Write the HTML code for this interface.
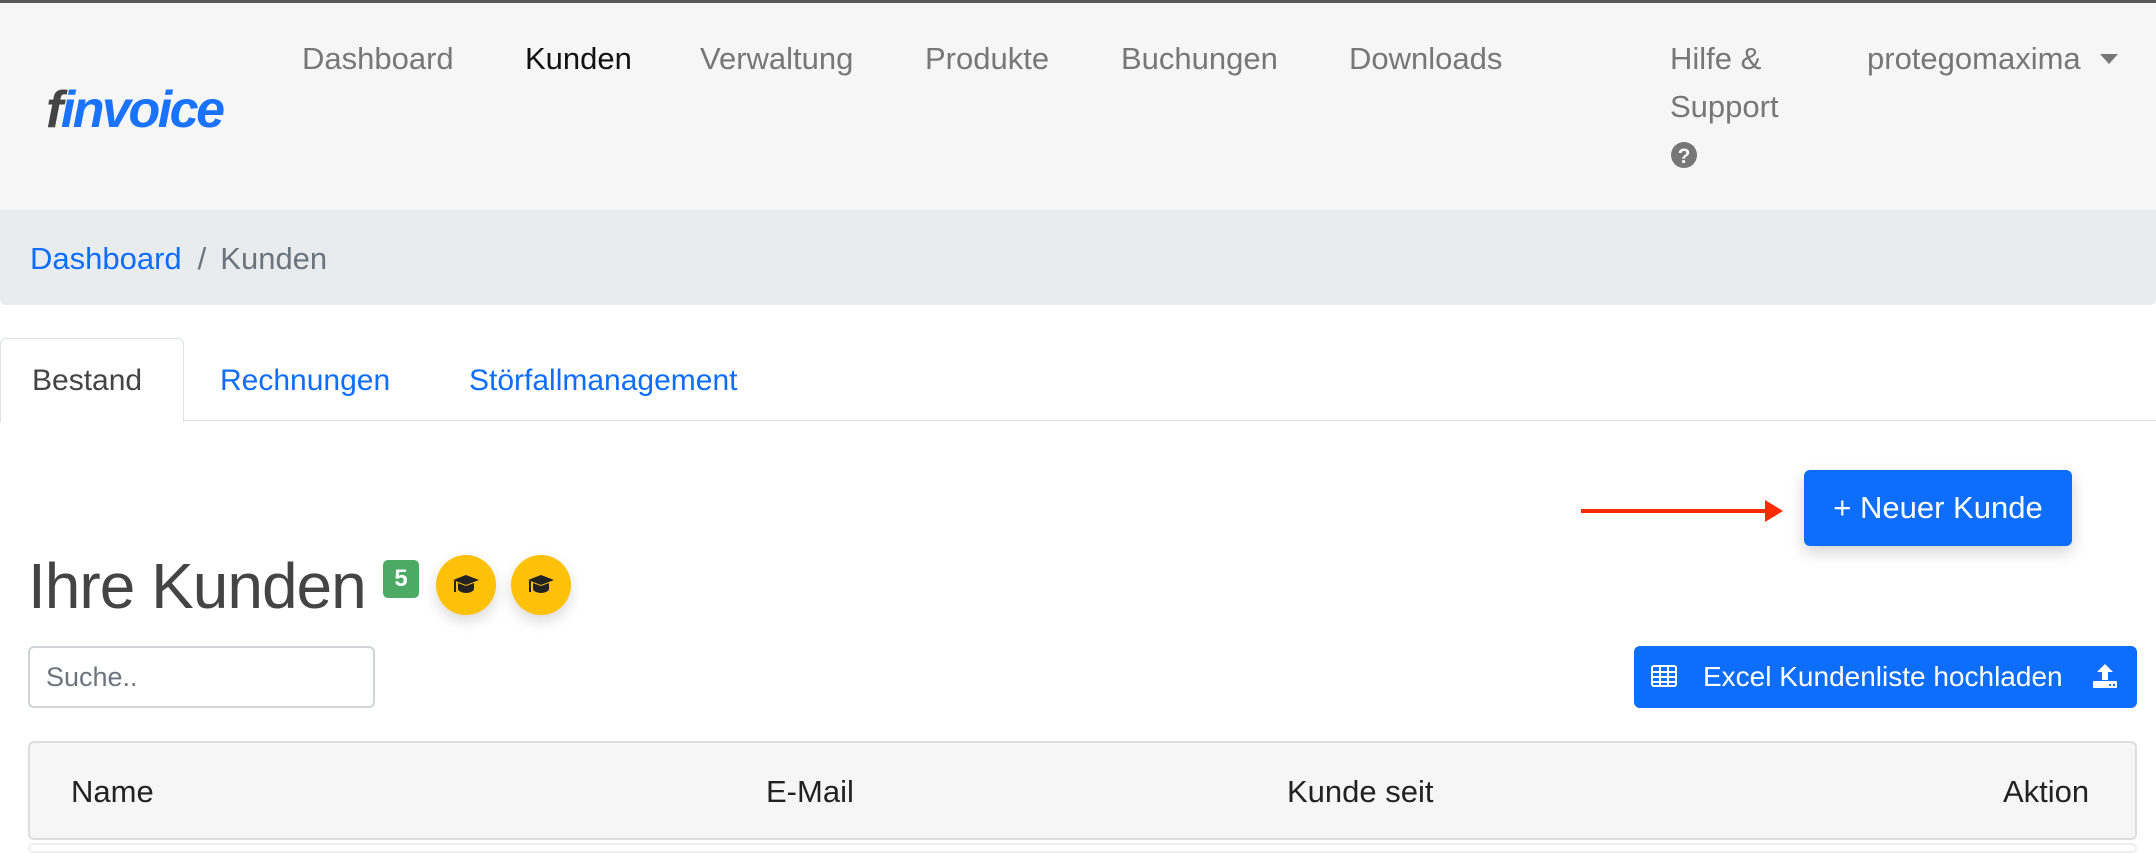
<!DOCTYPE html>
<html><head><meta charset="utf-8"><style>
*{box-sizing:border-box;margin:0;padding:0}
body{width:2156px;height:848px;overflow:hidden;background:#fff;font-family:"Liberation Sans",sans-serif;position:relative}
.a{position:absolute;white-space:nowrap}
.nav{font-size:31px;color:#777}
</style></head><body>
<div class="a" style="left:0;top:0;width:2156px;height:3px;background:#5a5a5a"></div>
<div class="a" style="left:0;top:3px;width:2156px;height:207px;background:#f6f6f6"></div>
<div class="a" style="left:46px;top:80px;font-size:52px;font-weight:bold;font-style:italic;letter-spacing:-2.5px;color:#1a73ff"><span style="color:#444">f</span>invoice</div>
<div class="a nav" style="left:302px;top:41px">Dashboard</div>
<div class="a nav" style="left:525px;top:41px;color:#111">Kunden</div>
<div class="a nav" style="left:700px;top:41px">Verwaltung</div>
<div class="a nav" style="left:925px;top:41px">Produkte</div>
<div class="a nav" style="left:1121px;top:41px">Buchungen</div>
<div class="a nav" style="left:1349px;top:41px">Downloads</div>
<div class="a nav" style="left:1670px;top:41px;line-height:48px;top:35px">Hilfe &amp;<br>Support</div>
<svg class="a" style="left:1670px;top:141px" width="28" height="28" viewBox="0 0 28 28"><circle cx="14" cy="14" r="13" fill="#777"/><text x="14" y="22" text-anchor="middle" font-family="Liberation Sans" font-weight="bold" font-size="21" fill="#f6f6f6">?</text></svg>
<div class="a nav" style="left:1867px;top:41px">protegomaxima</div>
<div class="a" style="left:2100px;top:54px;width:0;height:0;border-left:9px solid transparent;border-right:9px solid transparent;border-top:10px solid #777"></div>
<div class="a" style="left:0;top:210px;width:2156px;height:95px;background:#e9ecef;border-radius:0 0 6px 6px"></div>
<div class="a" style="left:30px;top:241px;font-size:31px;color:#0d6efd">Dashboard<span style="color:#6c757d;padding:0 14px 0 16px">/</span><span style="color:#6c757d">Kunden</span></div>
<div class="a" style="left:0;top:420px;width:2156px;height:1px;background:#dee2e6"></div>
<div class="a" style="left:0;top:338px;width:184px;height:84px;background:#fff;border:1px solid #dee2e6;border-bottom:none;border-radius:6px 6px 0 0"></div>
<div class="a" style="left:32px;top:364px;font-size:30px;color:#444">Bestand</div>
<div class="a" style="left:220px;top:364px;font-size:30px;color:#0d6efd">Rechnungen</div>
<div class="a" style="left:469px;top:364px;font-size:30px;color:#0d6efd">Störfallmanagement</div>
<div class="a" style="left:1581px;top:509px;width:190px;height:4px;background:#ff2a00"></div>
<div class="a" style="left:1765px;top:500px;width:0;height:0;border-top:11px solid transparent;border-bottom:11px solid transparent;border-left:18px solid #ff2a00"></div>
<div class="a" style="left:1804px;top:470px;width:268px;height:76px;background:#0d6efd;border-radius:6px;box-shadow:0 6px 16px rgba(0,0,0,.18);color:#fff;font-size:31px;text-align:center;line-height:76px">+ Neuer Kunde</div>
<div class="a" style="left:28px;top:549px;font-size:64px;letter-spacing:-1px;color:#444">Ihre Kunden</div>
<div class="a" style="left:383px;top:560px;width:36px;height:38px;background:#4caa64;border-radius:5px;color:#fff;font-weight:bold;font-size:24px;text-align:center;line-height:38px">5</div>
<div class="a" style="left:436px;top:555px;width:60px;height:60px;border-radius:50%;background:#ffc107;box-shadow:0 6px 14px rgba(0,0,0,.15)"></div>
<div class="a" style="left:511px;top:555px;width:60px;height:60px;border-radius:50%;background:#ffc107;box-shadow:0 6px 14px rgba(0,0,0,.15)"></div>
<svg class="a" style="left:452px;top:574px" width="28" height="22" viewBox="0 0 28 22"><path d="M14 1L27 6L14 11L1 6Z" fill="#222"/><path d="M6 9v6c0 2 4 4 8 4s8-2 8-4V9l-8 3z" fill="#222"/><path d="M3 7v11" stroke="#222" stroke-width="2"/></svg>
<svg class="a" style="left:527px;top:574px" width="28" height="22" viewBox="0 0 28 22"><path d="M14 1L27 6L14 11L1 6Z" fill="#222"/><path d="M6 9v6c0 2 4 4 8 4s8-2 8-4V9l-8 3z" fill="#222"/><path d="M3 7v11" stroke="#222" stroke-width="2"/></svg>
<div class="a" style="left:28px;top:646px;width:347px;height:62px;border:2px solid #ced4da;border-radius:6px;font-size:27px;color:#6c757d;padding-left:16px;line-height:58px">Suche..</div>
<div class="a" style="left:1634px;top:646px;width:503px;height:62px;background:#0d6efd;border-radius:6px;color:#fff;font-size:28px;line-height:62px;padding-left:69px">Excel Kundenliste hochladen</div>
<svg class="a" style="left:1651px;top:665px" width="26" height="22" viewBox="0 0 26 22"><rect x="1" y="1" width="24" height="20" rx="2" fill="none" stroke="#fff" stroke-width="2"/><path d="M1 7h24M1 12h24M1 17h24M9 1v20M17 1v20" stroke="#fff" stroke-width="2"/></svg>
<svg class="a" style="left:2092px;top:663px" width="26" height="26" viewBox="0 0 26 26"><path d="M13 1L5 9h5v8h6V9h5z" fill="#fff"/><rect x="1" y="18" width="24" height="7" rx="1" fill="#fff"/><rect x="17" y="21" width="2" height="2" fill="#0d6efd"/><rect x="21" y="21" width="2" height="2" fill="#0d6efd"/></svg>
<div class="a" style="left:28px;top:741px;width:2109px;height:99px;background:#f6f6f6;border:2px solid #ddd;border-radius:6px"></div>
<div class="a" style="left:28px;top:843px;width:2109px;height:10px;border:2px solid #eee;border-radius:6px"></div>
<div class="a" style="left:71px;top:774px;font-size:31px;color:#222">Name</div>
<div class="a" style="left:766px;top:774px;font-size:31px;color:#222">E-Mail</div>
<div class="a" style="left:1287px;top:774px;font-size:31px;color:#222">Kunde seit</div>
<div class="a" style="left:2003px;top:774px;font-size:31px;color:#222">Aktion</div>
</body></html>
